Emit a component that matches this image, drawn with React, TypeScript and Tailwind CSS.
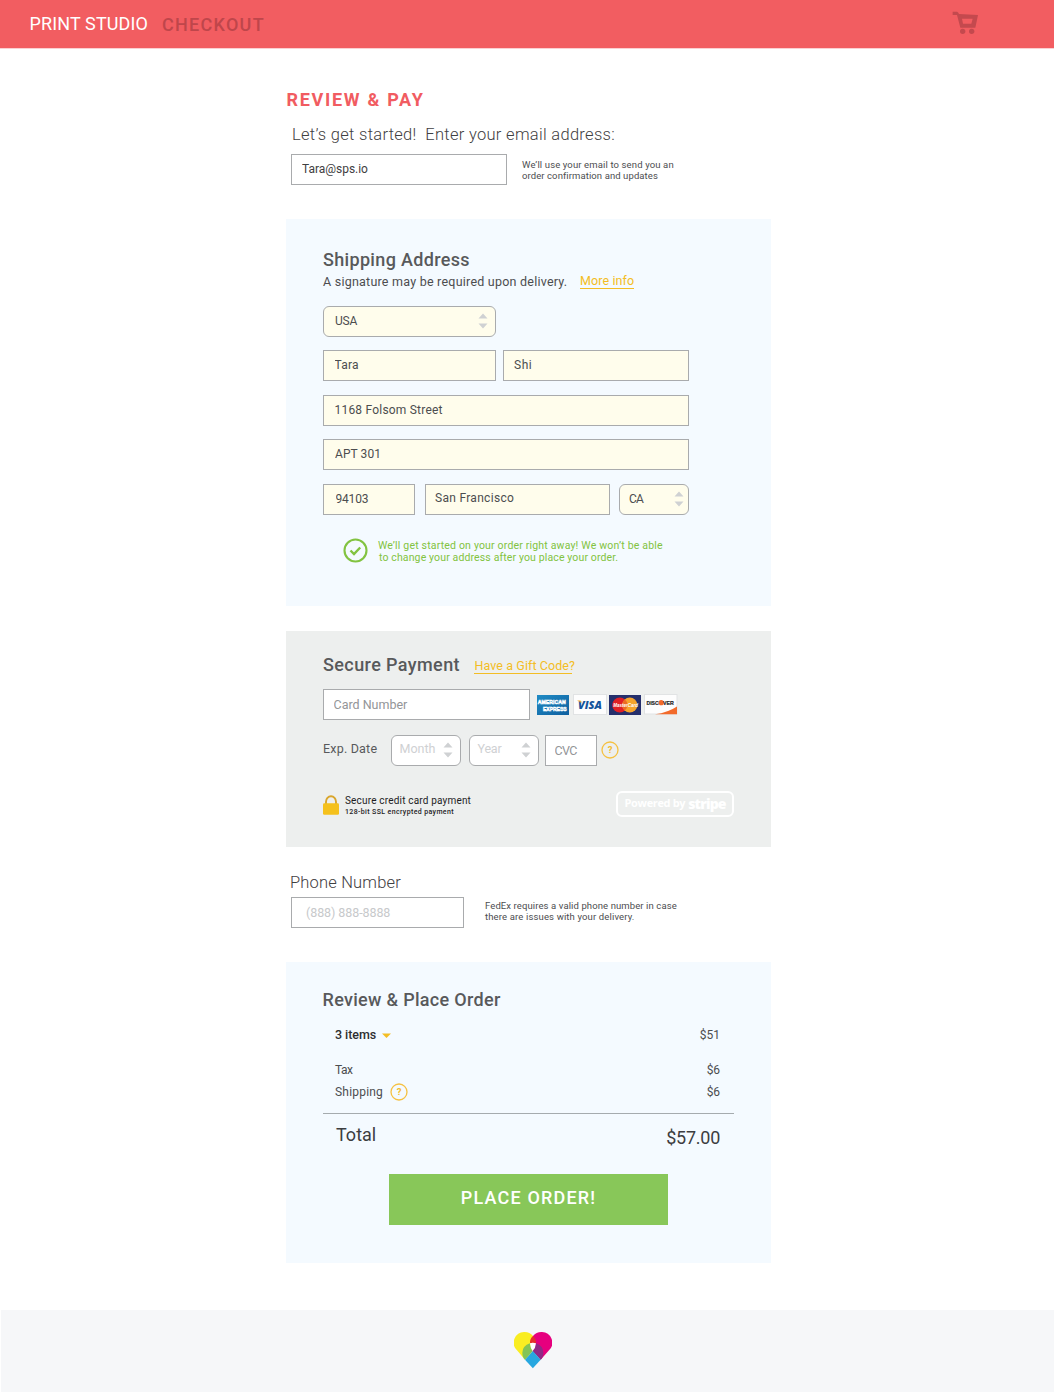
import type { ReactNode } from "react";

function Text({ className = "", children }: { className?: string; children: ReactNode }) {
  return <span className={`block whitespace-pre ${className}`}>{children}</span>;
}

function Input({ className = "", value, placeholder, label }: { className?: string; value?: string; placeholder?: string; label: string }) {
  return (
    <input
      aria-label={label}
      defaultValue={value}
      placeholder={placeholder}
      className={`block h-[31px] shrink-0 border border-[#a9abad] outline-none ${className}`}
    />
  );
}

function Stepper() {
  return (
    <svg width="10" height="16" viewBox="0 0 10 16" fill="#cfd1d3">
      <path d="M0.5 5.5 5 0.5 9.5 5.5ZM0.5 10.5 5 15.5 9.5 10.5Z" />
    </svg>
  );
}

function Select({ className = "", children }: { className?: string; children: ReactNode }) {
  return (
    <button type="button" className={`flex h-[31px] shrink-0 items-center justify-between rounded-[6px] border border-[#a9abad] pb-px ${className}`}>
      <span className="whitespace-pre">{children}</span>
      <Stepper />
    </button>
  );
}

function Help() {
  return (
    <svg width="18" height="18" viewBox="0 0 18 18">
      <circle cx="9" cy="9" r="8" fill="none" stroke="#f5c142" strokeWidth="1.300" />
      <text x="9" y="12.200" textAnchor="middle" fill="#f3bd2e" fontFamily="Roboto" fontWeight="700" fontSize="9.500">?</text>
    </svg>
  );
}

function Cart() {
  return (
    <svg width="27" height="24" viewBox="66 34 81 72" fill="#c4494e">
      <path fillRule="evenodd" d="M68 36H81Q85 37 87 43L144 46 136 84H91L81 46H68ZM96 57 99 72H124L128 57Z" />
      <circle cx="98" cy="95" r="8" />
      <circle cx="125" cy="95" r="8" />
    </svg>
  );
}

function Heart() {
  return (
    <svg width="38" height="36.5" viewBox="0 0 114 109.5">
      <path fill="#f9ed22" d="M33 83 9 55A32 32 0 0 1 32 0 32 32 0 0 1 57 12L56 57Z" />
      <path fill="#e6007e" d="M80 83 105 55A32 32 0 0 0 82 0 32 32 0 0 0 57 12L56 57Z" />
      <path fill="#e5302b" d="M57 12Q47 20 48 34 57 30 66 34 67 20 57 12Z" />
      <path fill="#84c455" d="M33 83 56 57Q49 48 48 34 25 42 25 62 25 76 33 83Z" />
      <path fill="#8f2a86" d="M80 83 56 57Q64 48 66 34 88 42 88 62 88 76 80 83Z" />
      <path fill="#fff" d="M48 34Q57 30 66 34 65 48 56 57 49 48 48 34Z" />
      <path fill="#27a7e0" d="M56.500 57 33 83 56.500 109 80 83Z" />
    </svg>
  );
}

function Cards() {
  return (
    <div className="ml-[7px] flex h-[21px] items-center">
      <svg width="32" height="20" viewBox="0 0 32 20">
        <defs>
          <linearGradient id="amex" x1="0" y1="0" x2="1" y2="1">
            <stop offset="0" stopColor="#1f8bc4" />
            <stop offset="1" stopColor="#0f5f9f" />
          </linearGradient>
        </defs>
        <rect width="32" height="20" fill="url(#amex)" />
        <g fill="#2a77b4" stroke="#fff" strokeWidth="0.600" fontFamily="Liberation Sans" fontWeight="700" fontSize="5.200">
          <text x="0.700" y="9.300">AMERICAN</text>
          <text x="6" y="15.700" fontSize="5">EXPRESS</text>
        </g>
      </svg>
      <svg className="ml-[4px]" width="34" height="21" viewBox="0 0 34 21">
        <rect x="0.500" y="0.500" width="33" height="20" fill="#fdfdfd" stroke="#e1e3e4" />
        <text x="5" y="14.700" fill="#14549c" fontFamily="Open Sans" fontStyle="italic" fontWeight="800" fontSize="11" textLength="24" lengthAdjust="spacingAndGlyphs">VISA</text>
        <path fill="#f2a52b" d="M4 6.500H7.200Q8.300 6.700 8.500 9Q7 7.500 4 6.500Z" />
      </svg>
      <svg className="ml-[2px]" width="32" height="20" viewBox="0 0 32 20">
        <rect width="32" height="20" fill="#252f6c" />
        <circle cx="10.800" cy="10" r="7.600" fill="#e01f26" />
        <circle cx="20.800" cy="10" r="7.600" fill="#f6a42c" />
        <path fill="#ec6a25" d="M15.800 4.300A7.600 7.600 0 0 1 15.800 15.700 7.600 7.600 0 0 1 15.800 4.300Z" />
        <text x="4.300" y="11.900" fill="#fff" fontFamily="Liberation Sans" fontStyle="italic" fontWeight="700" fontSize="4.500">MasterCard</text>
      </svg>
      <svg className="ml-[3px]" width="34" height="21" viewBox="0 0 34 21">
        <rect x="0.500" y="0.500" width="32.500" height="19.500" fill="#fdfdfd" stroke="#e1e3e4" />
        <path fill="#f26a2a" d="M33 12.500V20.300H11Q24 18.500 33 12.500Z" />
        <circle cx="17.200" cy="8.700" r="2.600" fill="#f26a2a" />
        <g fill="#222" stroke="#222" strokeWidth="0.200" fontFamily="Liberation Sans" fontWeight="700" fontSize="6.200">
          <text x="2.500" y="11" textLength="12.200" lengthAdjust="spacingAndGlyphs">DISC</text>
          <text x="19" y="11" textLength="10.800" lengthAdjust="spacingAndGlyphs">VER</text>
        </g>
      </svg>
    </div>
  );
}

const cream = "bg-[#fffdec] text-[12px] font-normal text-[#4c4d4f]";
const note = "text-[9.5px] leading-[11px] text-[#4c4d4f]";

export default function App() {
  return (
    <div className="h-[1392px] w-[1054px] overflow-hidden bg-white font-['Roboto',sans-serif] text-[#58595b]">
      <header className="flex h-[49px] items-start border-b border-[#fbd0d2] bg-[#f25d61]">
        <Text className="ml-[29.500px] mt-[14px] w-[132.500px] text-[18px] leading-[20px] tracking-[0.130px] text-white">PRINT STUDIO</Text>
        <Text className="mt-[15px] text-[18px] leading-[20px] font-medium tracking-[1.28px] text-[#bf464b]">CHECKOUT</Text>
        <div className="ml-auto mr-[75.500px] mt-[11px]"><Cart /></div>
      </header>

      <main className="ml-[286px] w-[485px]">
        <section className="h-[170px] pt-[40.500px]">
          <Text className="ml-[0.500px] text-[18px] leading-[20px] font-bold tracking-[1.7px] text-[#f15c61]">REVIEW &amp; PAY</Text>
          <Text className="ml-[6px] mt-[15px] text-[16.5px] leading-[20px] font-light tracking-[0.3px] text-[#3f4042]">{"Let’s get started!  Enter your email address:"}</Text>
          <div className="ml-[5px] mt-[9.500px] flex items-start">
            <Input label="Email address" value="Tara@sps.io" className="w-[216px] pb-[2px] pl-[10px] text-[12px] tracking-[-0.03px] text-[#3f4042]" />
            <div className={`ml-[15px] mt-[5px] ${note}`}>
              <Text className="tracking-[0.13px]">We’ll use your email to send you an</Text>
              <Text className="tracking-[0.09px]">order confirmation and updates</Text>
            </div>
          </div>
        </section>

        <section className="h-[387px] bg-[#f4faff] pt-[31px] pl-[37px]">
          <Text className="text-[18px] leading-[20px] font-medium tracking-[0.33px]">Shipping Address</Text>
          <div className="mt-[3px] flex h-[18px] items-start">
            <Text className="w-[257px] text-[12.5px] leading-[17px] tracking-[0.23px] text-[#4c4d4f]">A signature may be required upon delivery.</Text>
            <a href="#info" className="h-[16px] w-[54px] border-b border-[#f3bd24] text-[12.5px] leading-[15px] tracking-[0.1px] whitespace-pre text-[#f3bd24]">More info</a>
          </div>
          <div className="mt-[15px] flex w-[366px] flex-col">
            <Select className={`w-[173px] pr-[7px] pl-[11px] ${cream} tracking-[-0.2px]`}>USA</Select>
            <div className="mt-[13px] flex gap-[7px]">
              <Input label="First name" value="Tara" className={`w-[173px] pb-px pl-[10.500px] ${cream} tracking-[0.2px]`} />
              <Input label="Last name" value="Shi" className={`w-[186px] pb-px pl-[10px] ${cream} tracking-[0.5px]`} />
            </div>
            <Input label="Street" value="1168 Folsom Street" className={`mt-[14px] w-[366px] pb-[2px] pl-[10.500px] ${cream} tracking-[0.21px]`} />
            <Input label="Apartment" value="APT 301" className={`mt-[13px] w-[366px] pb-px pl-[11px] ${cream} tracking-[0.08px]`} />
            <div className="mt-[14px] flex">
              <Input label="Zip code" value="94103" className={`w-[92px] pb-px pl-[11.500px] ${cream} tracking-[-0.2px]`} />
              <Input label="City" value="San Francisco" className={`ml-[9.500px] w-[185.500px] pb-[3px] pl-[9.500px] ${cream} tracking-[0.3px]`} />
              <Select className={`ml-[9px] w-[70px] pr-[4px] pl-[9px] ${cream} tracking-[-0.8px]`}>CA</Select>
            </div>
          </div>
          <div className="mt-[23px] ml-[20px] flex items-start text-[#82c341]">
            <svg width="25" height="25" viewBox="0 0 25 25" fill="none" stroke="currentColor">
              <circle cx="12.500" cy="12.500" r="11" strokeWidth="2.100" />
              <path d="M7.500 12.500 11 16 17.200 9.500" strokeWidth="2.400" />
            </svg>
            <div className="ml-[10px] mt-[2px] text-[10.5px] leading-[12px]">
              <Text className="tracking-[0.18px]">We’ll get started on your order right away! We won’t be able</Text>
              <Text className="pl-px tracking-[0.13px]">to change your address after you place your order.</Text>
            </div>
          </div>
        </section>

        <section className="mt-[25px] h-[216px] bg-[#edefee] pt-[24px] pl-[37px]">
          <div className="flex h-[20px]">
            <Text className="w-[151px] text-[18px] leading-[20px] font-medium tracking-[0.4px]">Secure Payment</Text>
            <a href="#gift" className="mt-[3px] h-[16px] w-[98px] border-b border-[#f3bd24] pl-[0.500px] text-[12.5px] leading-[16px] tracking-[0.08px] whitespace-pre text-[#f3bd24]">Have a Gift Code?</a>
          </div>
          <div className="mt-[14px] flex items-center">
            <Input label="Card number" placeholder="Card Number" className="w-[207px] bg-white pl-[9.500px] text-[12.5px] placeholder:text-[#939598]" />
            <Cards />
          </div>
          <div className="mt-[14.500px] flex items-center">
            <Text className="w-[67.500px] pb-[1px] text-[12.5px] tracking-[0.2px]">Exp. Date</Text>
            <Select className="w-[70px] bg-white pr-[7px] pl-[8px] text-[12.5px] text-[#cfd1d3]">Month</Select>
            <Select className="ml-[8px] w-[70px] bg-white pr-[7px] pl-[8px] text-[12.5px] tracking-[-0.2px] text-[#cfd1d3]">Year</Select>
            <Input label="CVC" placeholder="CVC" className="ml-[6.500px] w-[52px] bg-white pl-[8.500px] text-[12.5px] tracking-[-0.6px] placeholder:text-[#939598]" />
            <span className="ml-[4px]"><Help /></span>
          </div>
          <div className="mt-[25px] flex items-start">
            <svg className="mt-[4px]" width="16" height="21" viewBox="0 0 16 21">
              <path d="M3 10V6.700A5 5.500 0 0 1 13 6.700V10" fill="none" stroke="#d9a52b" strokeWidth="1.900" />
              <rect y="8.300" width="16" height="11.500" rx="1.300" fill="#f5c11c" />
            </svg>
            <div className="ml-[6px] mt-[4px] text-[#1d1d1f]">
              <Text className="text-[10px] leading-[12px] tracking-[0.18px]">Secure credit card payment</Text>
              <Text className="text-[7px] leading-[10px] font-medium tracking-[0.37px]">128-bit SSL encrypted payment</Text>
            </div>
            <div className="ml-[145px] flex h-[26px] w-[118px] items-center justify-center gap-[3px] rounded-[6px] border-2 border-white font-['Open_Sans',sans-serif] text-white">
              <Text className="text-[11px] font-bold tracking-[-0.350px]">Powered by</Text>
              <Text className="text-[14px] leading-none font-extrabold tracking-[-0.85px]">stripe</Text>
            </div>
          </div>
        </section>

        <section className="h-[115px] pt-[25.500px] pl-[5px]">
          <Text className="-ml-[1px] text-[16.5px] leading-[20px] font-light tracking-[0.18px] text-[#3f4042]">Phone Number</Text>
          <div className="mt-[4.500px] flex items-start">
            <Input label="Phone" placeholder="(888) 888-8888" className="w-[173px] pl-[14px] text-[12.5px] tracking-[-0.08px] placeholder:text-[#c7c9cb]" />
            <div className={`ml-[21px] mt-[3px] ${note}`}>
              <Text className="tracking-[0.1px]">FedEx requires a valid phone number in case</Text>
              <Text className="tracking-[0.14px]">there are issues with your delivery.</Text>
            </div>
          </div>
        </section>

        <section className="h-[301px] bg-[#f4faff] pt-[28px] pl-[37px] text-[#4c4d4f]">
          <Text className="-ml-[0.500px] text-[18px] leading-[20px] font-medium tracking-[0.31px] text-[#58595b]">Review &amp; Place Order</Text>
          <div className="ml-[12px] w-[385px]">
            <div className="mt-[17px] flex h-[16px] items-center text-[12.5px]">
              <Text className="font-medium tracking-[-0.05px] text-[#2d2e30]">3 items</Text>
              <svg className="mt-px ml-[6px]" width="9" height="5" viewBox="0 0 9 5" fill="#f3bd24"><path d="M0 0.500H9L4.500 5Z" /></svg>
              <Text className="ml-auto text-[12px]">$51</Text>
            </div>
            <div className="mt-[18px] flex h-[18px] items-center justify-between text-[12px]">
              <Text className="pb-px tracking-[-0.5px]">Tax</Text>
              <Text className="tracking-[-0.1px]">$6</Text>
            </div>
            <div className="mt-[4px] flex h-[18px] items-center text-[12px]">
              <Text className="w-[55px] pb-px tracking-[0.2px]">Shipping</Text>
              <Help />
              <Text className="ml-auto tracking-[-0.1px]">$6</Text>
            </div>
          </div>
          <div className="mt-[12px] h-px w-[411px] bg-[#a5abae]" />
          <div className="ml-[13px] flex w-[384px] justify-between text-[18px] leading-[20px] text-[#3c3d3f]">
            <Text className="mt-[11px]">Total</Text>
            <Text className="mt-[14px] tracking-[-0.250px]">$57.00</Text>
          </div>
          <button type="button" className="mt-[26px] ml-[66px] block h-[51px] w-[279px] bg-[#88c759] pb-[4px] text-[18px] font-medium tracking-[1.180px] text-white">PLACE ORDER!</button>
        </section>
      </main>

      <footer className="mt-[47px] ml-px flex h-[82px] justify-center bg-[#f6f7f9] pt-[22px] pl-[11px]">
        <Heart />
      </footer>
    </div>
  );
}
